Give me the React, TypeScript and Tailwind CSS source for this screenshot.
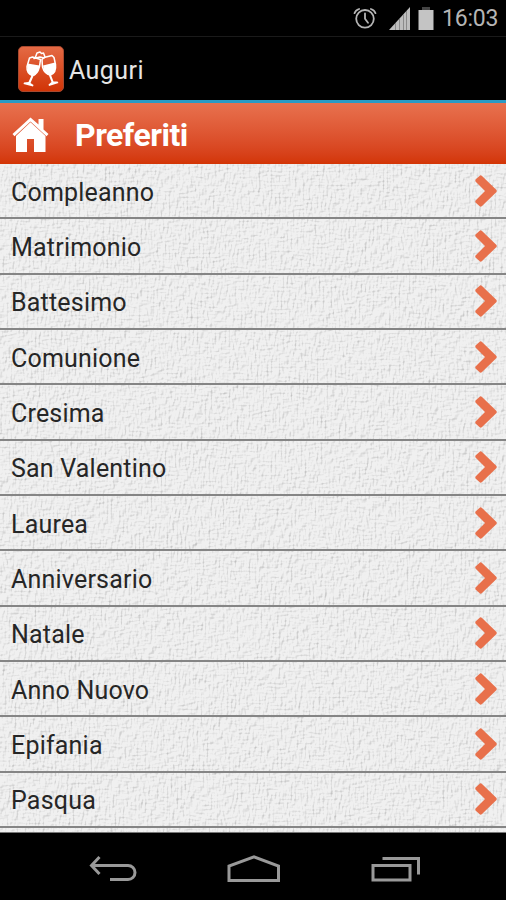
const categories = [
  "Compleanno",
  "Matrimonio",
  "Battesimo",
  "Comunione",
  "Cresima",
  "San Valentino",
  "Laurea",
  "Anniversario",
  "Natale",
  "Anno Nuovo",
  "Epifania",
  "Pasqua",
];

function StatusBar() {
  return (
    <div className="flex h-[37px] shrink-0 items-center border-b border-[#1a1a1a] bg-black pr-2 text-[#b5b5b5]">
      <svg viewBox="0 0 24 24" className="ml-auto h-6 w-6" fill="none" stroke="currentColor" strokeWidth="1.8" strokeLinecap="round">
        <circle cx="12" cy="12.8" r="8.8" />
        <path d="M12 7.5v5.300l3 4M1.5 7.200q1-3 4.600-4.200M22.5 7.200q-1-3-4.600-4.200" />
      </svg>
      <svg viewBox="0 0 22 23" className="ml-[12px] h-[23px] w-[22px]">
        <path d="M0 23L21 0v23z" fill="#bdbdbd" />
        <path d="M6.500 16v7M10.500 12v11M14.500 7v16M17.500 4v19" stroke="#8a8a8a" strokeWidth="1" />
      </svg>
      <svg viewBox="0 0 16 23" className="ml-[7px] h-[23px] w-4">
        <path d="M4 0h8v3H4z" fill="#444" />
        <path d="M0.500 3h15v20h-15z" fill="#c4c4c4" />
      </svg>
      <span className="ml-2 w-[56px] whitespace-nowrap text-[23px] leading-none tracking-[-0.2px]">16:03</span>
    </div>
  );
}

function TitleBar() {
  return (
    <div className="flex h-[63px] shrink-0 items-center bg-black pl-[18px] pt-px">
      <svg viewBox="0 0 46 46" className="h-[46px] w-[46px]">
        <defs>
          <linearGradient id="appIcon" x1="0" y1="0" x2="0" y2="1">
            <stop offset="0" stopColor="#e46a45" />
            <stop offset="1" stopColor="#d13406" />
          </linearGradient>
        </defs>
        <rect x="0.500" y="0.500" width="45" height="45" rx="4.500" fill="url(#appIcon)" stroke="#a8492f" />
        <g fill="none" stroke="#fff" strokeWidth="1.500" strokeLinejoin="round" strokeLinecap="round">
          <path d="M11.500 12l3-1 8 2.500-1 7q-2 8-7 9-6-2-5.500-9z" />
          <path d="M24 13.500l2-2 8-2 2 2 1.500 7q1 8-5 10.500-6-1-8-8z" />
          <path d="M17.500 11l1.500-4 3-1 1.500 1.500 2-.5 1.500 4M16 12.500l6-1.500 4 1" />
        </g>
        <g fill="#fff">
          <path d="M9.500 17.500L21.500 19.500Q20 28 15.500 30L12.500 37 15.500 39 15 40.500 5.500 38 6 36.500 10.500 36 13.500 29.500Q8 26 9.500 17.500z" />
          <path d="M25 19.500L37 16.500Q39 26 33 29L35.500 35.500 39.500 35.500 40.500 37 31 40 30.500 38.500 33.500 36 31 29.500Q26 28 25 19.500z" />
        </g>
      </svg>
      <span className="ml-[5px] mt-[2px] text-[25px] leading-none tracking-[0.45px] text-[#e5e5e5]">Auguri</span>
    </div>
  );
}

function Header() {
  return (
    <div className="flex h-[64px] shrink-0 items-center border-t-[3px] border-[#2b9ac4] bg-linear-to-b from-[#e8714e] to-[#d33505] pl-[12px] pt-[2px] text-white">
      <svg viewBox="0 0 37 36" className="h-9 w-[37px]" fill="#fff">
        <path d="M18.500 0.500L26.500 7.500V2h5v10.500L36.500 17l-2 2.300L18.500 4.600 2.500 19.300l-2-2.300z" />
        <path d="M18.500 5.300L33.500 19v16H22V22h-7v13H4V19z" />
      </svg>
      <h1 className="ml-[26px] text-[32px] font-bold leading-none tracking-[-0.5px]">Preferiti</h1>
    </div>
  );
}

// woven paper behind the list
function Canvas() {
  return (
    <svg className="absolute inset-0 h-full w-full" aria-hidden="true">
      <filter id="weave" x="0" y="0" width="100%" height="100%" colorInterpolationFilters="sRGB">
        <feTurbulence type="fractalNoise" baseFrequency="0.5 0.12" numOctaves="2" seed="4" result="v" />
        <feTurbulence type="fractalNoise" baseFrequency="0.12 0.5" numOctaves="2" seed="9" result="h" />
        <feComposite in="v" in2="h" operator="arithmetic" k2="0.55" k3="0.45" result="mix" />
        <feDiffuseLighting in="mix" surfaceScale="1.6" diffuseConstant="1.200" lightingColor="#ffffff">
          <feDistantLight azimuth="225" elevation="55" />
        </feDiffuseLighting>
      </filter>
      <rect width="100%" height="100%" fill="#e8e8e8" />
      <rect width="100%" height="100%" filter="url(#weave)" opacity="0.38" />
    </svg>
  );
}

function Row({ label }: { label: string }) {
  return (
    <li className="flex h-[55.330px] items-center justify-between border-b-2 border-[#858585] pl-[11px] pr-[9px]">
      <span className="mt-[3px] text-[25px] leading-none tracking-[0.200px] text-[#262626]">{label}</span>
      <svg viewBox="0 0 22 32" className="h-8 w-[22px]">
        <path d="M5 0.500Q6 0 7 1L21.500 15Q22 16 21.500 17L7 31Q6 32 5 31.500L0.500 27.500Q0 26.500 0.500 25.500L10 16 0.500 6.500Q0 5.500 0.500 4.500Z" fill="#e8704b" />
      </svg>
    </li>
  );
}

function NavBar() {
  return (
    <div className="flex h-[67px] shrink-0 items-center bg-black pl-[89px] pt-[5px]">
      <svg viewBox="0 0 48 28" className="h-7 w-12" fill="none" stroke="#999" strokeWidth="3">
        <path d="M10.500 2L2.500 10.500l8 8.500M3 10.500h36a7 7 0 0 1 0 14H21" />
      </svg>
      <svg viewBox="0 0 54 28" className="ml-[90px] h-7 w-[54px]" fill="none" stroke="#999" strokeWidth="3">
        <path d="M2 25.500V11L27 1.800 51.500 11v14.500z" />
      </svg>
      <svg viewBox="0 0 50 28" className="ml-[90px] h-7 w-[50px]" fill="none" stroke="#999" strokeWidth="3">
        <path d="M2 10.500h37v14.500H2zM11.500 3.500h36v16" />
      </svg>
    </div>
  );
}

export default function App() {
  return (
    <div className="flex h-[900px] w-[506px] flex-col overflow-hidden bg-black font-[Roboto,sans-serif]">
      <StatusBar />
      <TitleBar />
      <Header />
      <main className="relative h-[669px] shrink-0 overflow-hidden border-b border-[#777]">
        <Canvas />
        <ul className="relative">
          {categories.map((c) => (
            <Row key={c} label={c} />
          ))}
        </ul>
      </main>
      <NavBar />
    </div>
  );
}
